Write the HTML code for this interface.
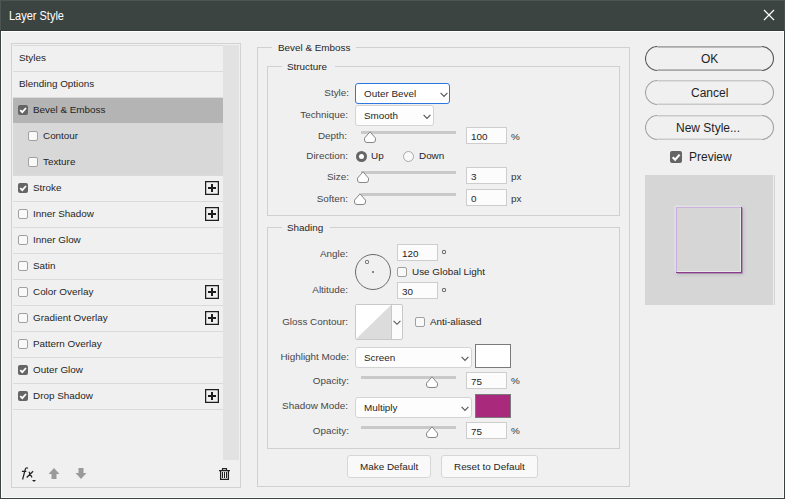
<!DOCTYPE html><html><head><meta charset="utf-8"><style>
html,body{margin:0;padding:0;}
body{width:785px;height:499px;overflow:hidden;position:relative;background:#f0f0f0;font-family:"Liberation Sans",sans-serif;}
.t{position:absolute;white-space:nowrap;line-height:12px;font-family:"Liberation Sans",sans-serif;}
</style></head><body>
<div style="position:absolute;left:0px;top:0px;width:785px;height:31px;background:#3c4442"></div>
<div style="position:absolute;left:0px;top:0px;width:785px;height:1px;background:#4d5553"></div>
<div style="position:absolute;left:0px;top:30px;width:785px;height:1px;background:#333b39"></div>
<div style="position:absolute;left:0px;top:0px;width:1px;height:30px;background:#4d5553"></div>
<div style="position:absolute;left:0px;top:31px;width:1px;height:468px;background:#3c4442"></div>
<div style="position:absolute;left:784px;top:0px;width:1px;height:499px;background:#4a5250"></div>
<div style="position:absolute;left:784px;top:31px;width:1px;height:468px;background:#3a4240"></div>
<div style="position:absolute;left:0px;top:498px;width:785px;height:1px;background:#3c4442"></div>
<div style="position:absolute;left:1px;top:31px;width:783px;height:1px;background:#ffffff"></div>
<div style="position:absolute;left:1px;top:31px;width:1px;height:467px;background:#ffffff"></div>
<div style="position:absolute;left:783px;top:31px;width:1px;height:467px;background:#fafafa"></div>
<div style="position:absolute;left:1px;top:497px;width:783px;height:1px;background:#fafafa"></div>
<div class="t" style="left:9px;top:10px;font-size:12px;color:#ffffff;transform:scaleX(0.915);transform-origin:0 0">Layer Style</div>
<svg style="position:absolute;left:762px;top:8px" width="14" height="14" viewBox="0 0 14 14"><path d="M2 2 L12 12 M12 2 L2 12" stroke="#fff" stroke-width="1.2"/></svg>
<div style="position:absolute;left:11px;top:43px;width:228px;height:443px;border:1px solid #d2d2d2"></div>
<div style="position:absolute;left:13px;top:45px;width:210px;height:1px;background:#dadada"></div>
<div style="position:absolute;left:223px;top:45px;width:16px;height:415px;background:#e2e2e2"></div>
<div style="position:absolute;left:13px;top:98px;width:210px;height:25px;background:#b4b4b4"></div>
<div style="position:absolute;left:13px;top:123px;width:210px;height:53px;background:#d8d8d8"></div>
<div style="position:absolute;left:13px;top:71px;width:210px;height:1px;background:#dadada"></div>
<div class="t" style="left:19px;top:52px;font-size:9.9px;color:#1f1f1f;">Styles</div>
<div style="position:absolute;left:13px;top:97px;width:210px;height:1px;background:#dadada"></div>
<div class="t" style="left:19px;top:78px;font-size:9.9px;color:#1f1f1f;">Blending Options</div>
<div style="position:absolute;left:18px;top:105px;width:10px;height:10px;background:#656565;border-radius:2px"><svg width="10" height="10" viewBox="0 0 10 10" style="position:absolute;left:0;top:0"><path d="M2.2 5.2 L4.3 7.2 L8 3" fill="none" stroke="#fff" stroke-width="1.8"/></svg></div>
<div class="t" style="left:33px;top:104px;font-size:9.9px;color:#1f1f1f;">Bevel &amp; Emboss</div>
<div style="position:absolute;left:28px;top:131px;width:8px;height:8px;background:#f9f9f9;border:1px solid #a0a0a0;border-radius:2px"></div>
<div class="t" style="left:43px;top:130px;font-size:9.9px;color:#1f1f1f;">Contour</div>
<div style="position:absolute;left:13px;top:175px;width:210px;height:1px;background:#dadada"></div>
<div style="position:absolute;left:28px;top:157px;width:8px;height:8px;background:#f9f9f9;border:1px solid #a0a0a0;border-radius:2px"></div>
<div class="t" style="left:43px;top:156px;font-size:9.9px;color:#1f1f1f;">Texture</div>
<div style="position:absolute;left:13px;top:201px;width:210px;height:1px;background:#dadada"></div>
<div style="position:absolute;left:18px;top:183px;width:10px;height:10px;background:#656565;border-radius:2px"><svg width="10" height="10" viewBox="0 0 10 10" style="position:absolute;left:0;top:0"><path d="M2.2 5.2 L4.3 7.2 L8 3" fill="none" stroke="#fff" stroke-width="1.8"/></svg></div>
<div class="t" style="left:33px;top:182px;font-size:9.9px;color:#1f1f1f;">Stroke</div>
<svg style="position:absolute;left:205px;top:181px" width="14" height="14" viewBox="0 0 14 14"><rect x="0.6" y="0.6" width="12.8" height="12.8" fill="none" stroke="#1e1e1e" stroke-width="1.3"/><rect x="3" y="6" width="8" height="2" fill="#1e1e1e"/><rect x="6" y="3" width="2" height="8" fill="#1e1e1e"/></svg>
<div style="position:absolute;left:13px;top:227px;width:210px;height:1px;background:#dadada"></div>
<div style="position:absolute;left:18px;top:209px;width:8px;height:8px;background:#f9f9f9;border:1px solid #a0a0a0;border-radius:2px"></div>
<div class="t" style="left:33px;top:208px;font-size:9.9px;color:#1f1f1f;">Inner Shadow</div>
<svg style="position:absolute;left:205px;top:207px" width="14" height="14" viewBox="0 0 14 14"><rect x="0.6" y="0.6" width="12.8" height="12.8" fill="none" stroke="#1e1e1e" stroke-width="1.3"/><rect x="3" y="6" width="8" height="2" fill="#1e1e1e"/><rect x="6" y="3" width="2" height="8" fill="#1e1e1e"/></svg>
<div style="position:absolute;left:13px;top:253px;width:210px;height:1px;background:#dadada"></div>
<div style="position:absolute;left:18px;top:235px;width:8px;height:8px;background:#f9f9f9;border:1px solid #a0a0a0;border-radius:2px"></div>
<div class="t" style="left:33px;top:234px;font-size:9.9px;color:#1f1f1f;">Inner Glow</div>
<div style="position:absolute;left:13px;top:279px;width:210px;height:1px;background:#dadada"></div>
<div style="position:absolute;left:18px;top:261px;width:8px;height:8px;background:#f9f9f9;border:1px solid #a0a0a0;border-radius:2px"></div>
<div class="t" style="left:33px;top:260px;font-size:9.9px;color:#1f1f1f;">Satin</div>
<div style="position:absolute;left:13px;top:305px;width:210px;height:1px;background:#dadada"></div>
<div style="position:absolute;left:18px;top:287px;width:8px;height:8px;background:#f9f9f9;border:1px solid #a0a0a0;border-radius:2px"></div>
<div class="t" style="left:33px;top:286px;font-size:9.9px;color:#1f1f1f;">Color Overlay</div>
<svg style="position:absolute;left:205px;top:285px" width="14" height="14" viewBox="0 0 14 14"><rect x="0.6" y="0.6" width="12.8" height="12.8" fill="none" stroke="#1e1e1e" stroke-width="1.3"/><rect x="3" y="6" width="8" height="2" fill="#1e1e1e"/><rect x="6" y="3" width="2" height="8" fill="#1e1e1e"/></svg>
<div style="position:absolute;left:13px;top:331px;width:210px;height:1px;background:#dadada"></div>
<div style="position:absolute;left:18px;top:313px;width:8px;height:8px;background:#f9f9f9;border:1px solid #a0a0a0;border-radius:2px"></div>
<div class="t" style="left:33px;top:312px;font-size:9.9px;color:#1f1f1f;">Gradient Overlay</div>
<svg style="position:absolute;left:205px;top:311px" width="14" height="14" viewBox="0 0 14 14"><rect x="0.6" y="0.6" width="12.8" height="12.8" fill="none" stroke="#1e1e1e" stroke-width="1.3"/><rect x="3" y="6" width="8" height="2" fill="#1e1e1e"/><rect x="6" y="3" width="2" height="8" fill="#1e1e1e"/></svg>
<div style="position:absolute;left:13px;top:357px;width:210px;height:1px;background:#dadada"></div>
<div style="position:absolute;left:18px;top:339px;width:8px;height:8px;background:#f9f9f9;border:1px solid #a0a0a0;border-radius:2px"></div>
<div class="t" style="left:33px;top:338px;font-size:9.9px;color:#1f1f1f;">Pattern Overlay</div>
<div style="position:absolute;left:13px;top:383px;width:210px;height:1px;background:#dadada"></div>
<div style="position:absolute;left:18px;top:365px;width:10px;height:10px;background:#656565;border-radius:2px"><svg width="10" height="10" viewBox="0 0 10 10" style="position:absolute;left:0;top:0"><path d="M2.2 5.2 L4.3 7.2 L8 3" fill="none" stroke="#fff" stroke-width="1.8"/></svg></div>
<div class="t" style="left:33px;top:364px;font-size:9.9px;color:#1f1f1f;">Outer Glow</div>
<div style="position:absolute;left:13px;top:409px;width:210px;height:1px;background:#dadada"></div>
<div style="position:absolute;left:18px;top:391px;width:10px;height:10px;background:#656565;border-radius:2px"><svg width="10" height="10" viewBox="0 0 10 10" style="position:absolute;left:0;top:0"><path d="M2.2 5.2 L4.3 7.2 L8 3" fill="none" stroke="#fff" stroke-width="1.8"/></svg></div>
<div class="t" style="left:33px;top:390px;font-size:9.9px;color:#1f1f1f;">Drop Shadow</div>
<svg style="position:absolute;left:205px;top:389px" width="14" height="14" viewBox="0 0 14 14"><rect x="0.6" y="0.6" width="12.8" height="12.8" fill="none" stroke="#1e1e1e" stroke-width="1.3"/><rect x="3" y="6" width="8" height="2" fill="#1e1e1e"/><rect x="6" y="3" width="2" height="8" fill="#1e1e1e"/></svg>
<svg style="position:absolute;left:18px;top:464px" width="22" height="20" viewBox="0 0 22 20"><path d="M9.9 4.2 Q8.1 3.3 7.3 5.3 L4.6 15.5 M3.9 7.4 H8.3 M10.9 7.8 L14 13.4 M15.1 7.3 L8.7 13.5" fill="none" stroke="#222" stroke-width="1.2"/><path d="M14 16.1 H18 L16 17.9 Z" fill="#222"/></svg>
<svg style="position:absolute;left:48px;top:468px" width="12" height="12" viewBox="0 0 12 12"><path d="M6 0 L11.5 6 L8.5 6 L8.5 11 L3.5 11 L3.5 6 L0.5 6 Z" fill="#9a9a9a"/></svg>
<svg style="position:absolute;left:75px;top:468px" width="12" height="12" viewBox="0 0 12 12"><path d="M3.5 0 L8.5 0 L8.5 5 L11.5 5 L6 11 L0.5 5 L3.5 5 Z" fill="#9a9a9a"/></svg>
<svg style="position:absolute;left:218px;top:467px" width="13" height="14" viewBox="0 0 13 14"><path d="M4.5 3 V1.6 Q4.5 1.5 4.6 1.5 H8.4 Q8.5 1.5 8.5 1.6 V3 M1 3.6 H12 M2.6 3.6 V12.4 H10.4 V3.6" fill="none" stroke="#222" stroke-width="1.25"/><path d="M4.5 5 V11 M6.5 5 V11 M8.5 5 V11" fill="none" stroke="#222" stroke-width="1"/></svg>
<div style="position:absolute;left:257px;top:47px;width:15px;height:1px;background:#d0d0d0"></div>
<div style="position:absolute;left:356px;top:47px;width:274px;height:1px;background:#d0d0d0"></div>
<div style="position:absolute;left:257px;top:47px;width:1px;height:440px;background:#d0d0d0"></div>
<div style="position:absolute;left:629px;top:47px;width:1px;height:440px;background:#d0d0d0"></div>
<div style="position:absolute;left:257px;top:486px;width:373px;height:1px;background:#d0d0d0"></div>
<div class="t" style="left:278px;top:42px;font-size:9.9px;color:#1f1f1f;">Bevel &amp; Emboss</div>
<div style="position:absolute;left:267px;top:66px;width:15px;height:1px;background:#d0d0d0"></div>
<div style="position:absolute;left:335px;top:66px;width:285px;height:1px;background:#d0d0d0"></div>
<div style="position:absolute;left:267px;top:66px;width:1px;height:150px;background:#d0d0d0"></div>
<div style="position:absolute;left:619px;top:66px;width:1px;height:150px;background:#d0d0d0"></div>
<div style="position:absolute;left:267px;top:215px;width:353px;height:1px;background:#d0d0d0"></div>
<div class="t" style="left:287px;top:61px;font-size:9.9px;color:#1f1f1f;">Structure</div>
<div class="t" style="right:436px;top:87px;font-size:9.9px;color:#474747;">Style:</div>
<div style="position:absolute;left:355px;top:83px;width:93px;height:19px;border:1.5px solid #2c76e0;border-radius:3px;background:#fff"></div>
<div class="t" style="left:364px;top:88px;font-size:9.9px;color:#1f1f1f;">Outer Bevel</div>
<svg style="position:absolute;left:440px;top:92px" width="8" height="6" viewBox="0 0 8 6"><path d="M0.6 0.8 L4 4.3 L7.4 0.8" fill="none" stroke="#555" stroke-width="1.15"/></svg>
<div class="t" style="right:437px;top:109px;font-size:9.9px;color:#474747;">Technique:</div>
<div style="position:absolute;left:355px;top:105px;width:77px;height:19px;border:1px solid #d4d4d4;border-radius:3px;background:#fdfdfd"></div>
<div class="t" style="left:364px;top:110px;font-size:9.9px;color:#1f1f1f;">Smooth</div>
<svg style="position:absolute;left:423px;top:114px" width="8" height="6" viewBox="0 0 8 6"><path d="M0.6 0.8 L4 4.3 L7.4 0.8" fill="none" stroke="#555" stroke-width="1.15"/></svg>
<div class="t" style="right:438px;top:130px;font-size:9.9px;color:#474747;">Depth:</div>
<div style="position:absolute;left:361px;top:131px;width:95px;height:3px;background:#c9c9c9"></div>
<svg style="position:absolute;left:364px;top:131px" width="13" height="13" viewBox="0 0 13 13"><path d="M6 0.8 L11.5 7.2 V9 Q11.5 11.5 9 11.5 H3 Q0.5 11.5 0.5 9 V7.2 Z" fill="#fff" stroke="#858585" stroke-width="1"/></svg>
<div style="position:absolute;left:466px;top:127px;width:39px;height:15px;border:1px solid #cdcdcd;background:#fcfcfc"></div>
<div class="t" style="left:471px;top:131px;font-size:9.9px;color:#1f1f1f;">100</div>
<div class="t" style="left:511px;top:131px;font-size:9.9px;color:#333;">%</div>
<div class="t" style="right:437px;top:150px;font-size:9.9px;color:#474747;">Direction:</div>
<div style="position:absolute;left:356px;top:151px;width:11px;height:11px;border-radius:50%;background:#666"></div>
<div style="position:absolute;left:359px;top:154px;width:5px;height:5px;border-radius:50%;background:#fff"></div>
<div class="t" style="left:371px;top:150px;font-size:9.9px;color:#1f1f1f;">Up</div>
<div style="position:absolute;left:403px;top:151px;width:9px;height:9px;border-radius:50%;background:#f9f9f9;border:1px solid #a8a8a8"></div>
<div class="t" style="left:419px;top:150px;font-size:9.9px;color:#1f1f1f;">Down</div>
<div class="t" style="right:436px;top:171px;font-size:9.9px;color:#474747;">Size:</div>
<div style="position:absolute;left:361px;top:171px;width:95px;height:3px;background:#c9c9c9"></div>
<svg style="position:absolute;left:357px;top:171px" width="13" height="13" viewBox="0 0 13 13"><path d="M6 0.8 L11.5 7.2 V9 Q11.5 11.5 9 11.5 H3 Q0.5 11.5 0.5 9 V7.2 Z" fill="#fff" stroke="#858585" stroke-width="1"/></svg>
<div style="position:absolute;left:466px;top:167px;width:39px;height:15px;border:1px solid #cdcdcd;background:#fcfcfc"></div>
<div class="t" style="left:471px;top:171px;font-size:9.9px;color:#1f1f1f;">3</div>
<div class="t" style="left:511px;top:171px;font-size:9.9px;color:#333;">px</div>
<div class="t" style="right:437px;top:193px;font-size:9.9px;color:#474747;">Soften:</div>
<div style="position:absolute;left:361px;top:193px;width:95px;height:3px;background:#c9c9c9"></div>
<svg style="position:absolute;left:354px;top:193px" width="13" height="13" viewBox="0 0 13 13"><path d="M6 0.8 L11.5 7.2 V9 Q11.5 11.5 9 11.5 H3 Q0.5 11.5 0.5 9 V7.2 Z" fill="#fff" stroke="#858585" stroke-width="1"/></svg>
<div style="position:absolute;left:466px;top:189px;width:39px;height:15px;border:1px solid #cdcdcd;background:#fcfcfc"></div>
<div class="t" style="left:471px;top:193px;font-size:9.9px;color:#1f1f1f;">0</div>
<div class="t" style="left:511px;top:193px;font-size:9.9px;color:#333;">px</div>
<div style="position:absolute;left:267px;top:227px;width:15px;height:1px;background:#d0d0d0"></div>
<div style="position:absolute;left:330px;top:227px;width:290px;height:1px;background:#d0d0d0"></div>
<div style="position:absolute;left:267px;top:227px;width:1px;height:222px;background:#d0d0d0"></div>
<div style="position:absolute;left:619px;top:227px;width:1px;height:222px;background:#d0d0d0"></div>
<div style="position:absolute;left:267px;top:448px;width:353px;height:1px;background:#d0d0d0"></div>
<div class="t" style="left:287px;top:222px;font-size:9.9px;color:#1f1f1f;">Shading</div>
<div class="t" style="right:437px;top:248px;font-size:9.9px;color:#474747;">Angle:</div>
<svg style="position:absolute;left:354px;top:253px" width="38" height="38" viewBox="0 0 38 38"><circle cx="19" cy="19" r="17.5" fill="none" stroke="#6a6a6a" stroke-width="1"/><circle cx="19" cy="19" r="0.9" fill="#555"/></svg>
<div style="position:absolute;left:397px;top:244px;width:39px;height:15px;border:1px solid #cdcdcd;background:#fcfcfc"></div>
<div class="t" style="left:402px;top:248px;font-size:9.9px;color:#1f1f1f;">120</div>
<div style="position:absolute;left:442px;top:250px;width:2px;height:2px;border:1px solid #555;border-radius:1.2px"></div>
<div style="position:absolute;left:365px;top:260px;width:2px;height:2px;border:1px solid #6a6a6a;border-radius:1.2px"></div>
<div style="position:absolute;left:397px;top:267px;width:8px;height:8px;background:#f9f9f9;border:1px solid #a0a0a0;border-radius:2px"></div>
<div class="t" style="left:412px;top:266px;font-size:9.9px;color:#1f1f1f;">Use Global Light</div>
<div class="t" style="right:437px;top:284px;font-size:9.9px;color:#474747;">Altitude:</div>
<div style="position:absolute;left:397px;top:282px;width:39px;height:15px;border:1px solid #cdcdcd;background:#fcfcfc"></div>
<div class="t" style="left:402px;top:286px;font-size:9.9px;color:#1f1f1f;">30</div>
<div style="position:absolute;left:442px;top:288px;width:2px;height:2px;border:1px solid #555;border-radius:1.2px"></div>
<div class="t" style="right:437px;top:316px;font-size:9.9px;color:#474747;">Gloss Contour:</div>
<div style="position:absolute;left:355px;top:304px;width:46px;height:34px;border:1px solid #c8c8c8;border-radius:2px;background:#fcfcfc;overflow:hidden"><svg style="position:absolute;left:0;top:0" width="35" height="34" viewBox="0 0 35 34"><rect width="35" height="34" fill="#fff"/><path d="M0 34 L35 0 L35 34 Z" fill="#dcdcdc"/></svg><div style="position:absolute;left:35px;top:0;width:1px;height:34px;background:#c8c8c8"></div></div>
<svg style="position:absolute;left:393px;top:320px" width="8" height="6" viewBox="0 0 8 6"><path d="M0.6 0.8 L4 4.3 L7.4 0.8" fill="none" stroke="#555" stroke-width="1.1"/></svg>
<div style="position:absolute;left:415px;top:317px;width:8px;height:8px;background:#f9f9f9;border:1px solid #a0a0a0;border-radius:2px"></div>
<div class="t" style="left:430px;top:316px;font-size:9.9px;color:#1f1f1f;">Anti-aliased</div>
<div class="t" style="right:436px;top:351px;font-size:9.9px;color:#474747;">Highlight Mode:</div>
<div style="position:absolute;left:355px;top:347px;width:115px;height:19px;border:1px solid #d4d4d4;border-radius:3px;background:#fdfdfd"></div>
<div class="t" style="left:364px;top:352px;font-size:9.9px;color:#1f1f1f;">Screen</div>
<svg style="position:absolute;left:461px;top:356px" width="8" height="6" viewBox="0 0 8 6"><path d="M0.6 0.8 L4 4.3 L7.4 0.8" fill="none" stroke="#555" stroke-width="1.15"/></svg>
<div style="position:absolute;left:475px;top:344px;width:34px;height:22px;border:1px solid #7a7a7a;background:#fff"></div>
<div class="t" style="right:436px;top:375px;font-size:9.9px;color:#474747;">Opacity:</div>
<div style="position:absolute;left:361px;top:376px;width:95px;height:3px;background:#c9c9c9"></div>
<svg style="position:absolute;left:426px;top:376px" width="13" height="13" viewBox="0 0 13 13"><path d="M6 0.8 L11.5 7.2 V9 Q11.5 11.5 9 11.5 H3 Q0.5 11.5 0.5 9 V7.2 Z" fill="#fff" stroke="#858585" stroke-width="1"/></svg>
<div style="position:absolute;left:466px;top:372px;width:39px;height:15px;border:1px solid #cdcdcd;background:#fcfcfc"></div>
<div class="t" style="left:471px;top:376px;font-size:9.9px;color:#1f1f1f;">75</div>
<div class="t" style="left:511px;top:375px;font-size:9.9px;color:#333;">%</div>
<div class="t" style="right:437px;top:400px;font-size:9.9px;color:#474747;">Shadow Mode:</div>
<div style="position:absolute;left:355px;top:397px;width:115px;height:19px;border:1px solid #d4d4d4;border-radius:3px;background:#fdfdfd"></div>
<div class="t" style="left:364px;top:402px;font-size:9.9px;color:#1f1f1f;">Multiply</div>
<svg style="position:absolute;left:461px;top:406px" width="8" height="6" viewBox="0 0 8 6"><path d="M0.6 0.8 L4 4.3 L7.4 0.8" fill="none" stroke="#555" stroke-width="1.15"/></svg>
<div style="position:absolute;left:475px;top:394px;width:34px;height:22px;border:1px solid #7a7a7a;background:#a92a7c"></div>
<div class="t" style="right:436px;top:425px;font-size:9.9px;color:#474747;">Opacity:</div>
<div style="position:absolute;left:361px;top:426px;width:95px;height:3px;background:#c9c9c9"></div>
<svg style="position:absolute;left:426px;top:426px" width="13" height="13" viewBox="0 0 13 13"><path d="M6 0.8 L11.5 7.2 V9 Q11.5 11.5 9 11.5 H3 Q0.5 11.5 0.5 9 V7.2 Z" fill="#fff" stroke="#858585" stroke-width="1"/></svg>
<div style="position:absolute;left:466px;top:422px;width:39px;height:15px;border:1px solid #cdcdcd;background:#fcfcfc"></div>
<div class="t" style="left:471px;top:426px;font-size:9.9px;color:#1f1f1f;">75</div>
<div class="t" style="left:511px;top:425px;font-size:9.9px;color:#333;">%</div>
<div style="position:absolute;left:347px;top:455px;width:82px;height:21px;border:1px solid #d6d6d6;border-radius:3px;background:#f9f9f9"></div>
<div class="t" style="left:360px;top:461px;font-size:9.9px;color:#1f1f1f;">Make Default</div>
<div style="position:absolute;left:441px;top:455px;width:95px;height:21px;border:1px solid #d6d6d6;border-radius:3px;background:#f9f9f9"></div>
<div class="t" style="left:454px;top:461px;font-size:9.9px;color:#1f1f1f;">Reset to Default</div>
<svg style="position:absolute;left:645px;top:46px" width="130" height="26" viewBox="0 0 130 26"><path d="M12.5 0.5 A12 12 0 0 0 12.5 24.5 M116.5 0.5 A12 12 0 0 1 116.5 24.5" fill="none" stroke="#555555" stroke-width="1.1"/><path d="M12.5 0.8 H116.5 M12.5 24.2 H116.5" fill="none" stroke="#a9a9a9" stroke-width="1.7"/></svg>
<div class="t" style="left:701px;top:53px;font-size:12px;color:#1f1f1f;">OK</div>
<svg style="position:absolute;left:645px;top:80px" width="130" height="26" viewBox="0 0 130 26"><path d="M12.5 0.5 A12 12 0 0 0 12.5 24.5 M116.5 0.5 A12 12 0 0 1 116.5 24.5" fill="none" stroke="#a0a0a0" stroke-width="1.1"/><path d="M12.5 0.8 H116.5 M12.5 24.2 H116.5" fill="none" stroke="#c9c9c9" stroke-width="1.5"/></svg>
<div class="t" style="left:691px;top:87px;font-size:12px;color:#1f1f1f;">Cancel</div>
<svg style="position:absolute;left:645px;top:115px" width="130" height="26" viewBox="0 0 130 26"><path d="M12.5 0.5 A12 12 0 0 0 12.5 24.5 M116.5 0.5 A12 12 0 0 1 116.5 24.5" fill="none" stroke="#a0a0a0" stroke-width="1.1"/><path d="M12.5 0.8 H116.5 M12.5 24.2 H116.5" fill="none" stroke="#c9c9c9" stroke-width="1.5"/></svg>
<div class="t" style="left:676px;top:122px;font-size:12px;color:#1f1f1f;">New Style...</div>
<div style="position:absolute;left:670px;top:151px;width:12px;height:12px;background:#656565;border-radius:2px"><svg width="12" height="12" viewBox="0 0 10 10" style="position:absolute;left:0;top:0"><path d="M2.2 5.2 L4.3 7.2 L8 3" fill="none" stroke="#fff" stroke-width="1.8"/></svg></div>
<div class="t" style="left:689px;top:151px;font-size:12px;color:#1f1f1f;">Preview</div>
<div style="position:absolute;left:645px;top:175px;width:130px;height:130px;background:#d6d6d6"></div>
<div style="position:absolute;left:773px;top:175px;width:1px;height:130px;background:#ececec"></div>
<div style="position:absolute;left:676px;top:207px;width:66px;height:66px;background:#d6d6d6;box-shadow:1px 1px 4px rgba(40,50,50,0.2), -1px -1px 2px rgba(255,255,255,0.7)"></div>
<div style="position:absolute;left:676px;top:207px;width:65px;height:1px;background:#cdb2e0"></div>
<div style="position:absolute;left:676px;top:207px;width:1px;height:65px;background:#c8aadc"></div>
<div style="position:absolute;left:741px;top:207px;width:1px;height:66px;background:#8a3c8e"></div>
<div style="position:absolute;left:742px;top:208px;width:1px;height:66px;background:rgba(138,60,142,0.35)"></div>
<div style="position:absolute;left:676px;top:272px;width:66px;height:1px;background:#8a3c8e"></div>
<div style="position:absolute;left:677px;top:273px;width:65px;height:1px;background:rgba(138,60,142,0.35)"></div>
<div style="position:absolute;left:740px;top:208px;width:1px;height:63px;background:#e6ebe6"></div>
<div style="position:absolute;left:677px;top:271px;width:63px;height:1px;background:#e6ebe6"></div>
</body></html>
